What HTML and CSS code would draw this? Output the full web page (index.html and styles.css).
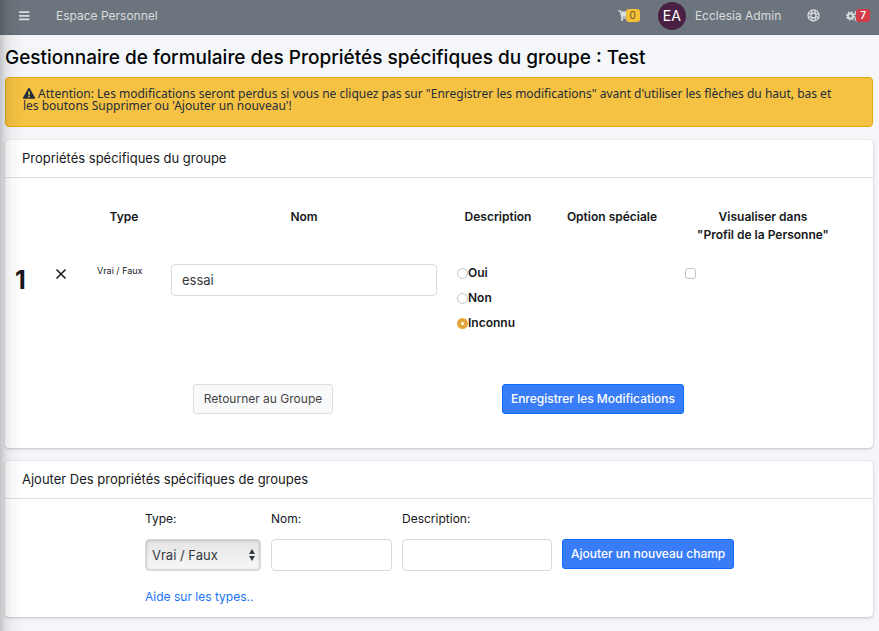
FILE: index.html
```html
<!DOCTYPE html>
<html lang="fr">
<head>
<meta charset="utf-8">
<meta name="viewport" content="width=device-width, initial-scale=1">
<title>Propriétés spécifiques du groupe</title>
<link rel="stylesheet" href="styles.css">
</head>
<body>
<header class="navbar">
  <button class="nav-button" type="button" aria-label="Menu">
    <svg width="12" height="12" viewBox="0 0 12 12"><path d="M1 2.2h10.4M1 5.8h10.4M1 9.4h10.4" stroke="currentColor" stroke-width="1.7"/></svg>
  </button>
  <a class="nav-home" href="#">Espace Personnel</a>
  <a class="nav-icon cart" href="#" aria-label="Panier">
    <svg width="12" height="11" viewBox="0 0 576 512"><path fill="currentColor" d="M528 301l47-208c4-15-8-29-23-29H159l-9-45C148 8 138 0 127 0H24C11 0 0 11 0 24v16c0 13 11 24 24 24h70l70 343a56 56 0 1 0 67 9h210a56 56 0 1 0 64-11l5-25c4-15-8-29-23-29H218l-6-32h293c11 0 20-8 23-18z"/></svg>
    <span class="badge badge-warning">0</span>
  </a>
  <a class="user" href="#">
    <span class="avatar">EA</span>
    <span>Ecclesia Admin</span>
  </a>
  <a class="nav-icon" href="#" aria-label="Aide">
    <svg width="13" height="13" viewBox="0 0 26 26" fill="none" stroke="currentColor"><circle cx="13" cy="13" r="11" stroke-width="2.6"/><circle cx="13" cy="13" r="5" stroke-width="2.6"/><path d="M9.6 2v6.4M16.4 2v6.4M9.6 17.6V24M16.4 17.6V24M2 9.6h6.4M2 16.4h6.4M17.6 9.6H24M17.6 16.4H24" stroke-width="2.4"/></svg>
  </a>
  <a class="nav-icon gears" href="#" aria-label="Réglages">
    <svg width="14" height="12" viewBox="0 0 28 24" fill="none" stroke="currentColor"><circle cx="9" cy="12" r="5" stroke-width="4"/><circle cx="9" cy="12" r="7.6" stroke-width="3" stroke-dasharray="3.2 2.77"/><circle cx="22" cy="6" r="3" stroke-width="2.4"/><circle cx="22" cy="6" r="4.6" stroke-width="2" stroke-dasharray="2.4 2.4"/><circle cx="22" cy="18" r="3" stroke-width="2.4"/><circle cx="22" cy="18" r="4.6" stroke-width="2" stroke-dasharray="2.4 2.4"/></svg>
    <span class="badge badge-danger">7</span>
  </a>
</header>

<main class="content">
  <h1>Gestionnaire de formulaire des Propriétés spécifiques du groupe : Test</h1>

  <div class="alert" role="alert">
    <svg class="alert-icon" width="12" height="11" viewBox="0 0 24 22"><path fill="currentColor" fill-rule="evenodd" d="M10.3 1.2a2 2 0 0 1 3.4 0l9.9 17.4a2 2 0 0 1-1.7 3H2.1a2 2 0 0 1-1.7-3zM10.2 7l.5 7.4h2.6l.5-7.4zM12 15.6a1.8 1.8 0 1 0 0 3.6 1.8 1.8 0 0 0 0-3.6z"/></svg>
    Attention: Les modifications seront perdus si vous ne cliquez pas sur "Enregistrer les modifications" avant d'utiliser les flèches du haut, bas et les boutons Supprimer ou 'Ajouter un nouveau'!
  </div>

  <section class="card">
    <h2 class="card-title">Propriétés spécifiques du groupe</h2>
    <form class="fields-form">
      <table class="fields">
        <colgroup><col class="col-rank"><col class="col-delete"><col class="col-type"><col><col class="col-description"><col class="col-option"><col class="col-profile"></colgroup>
        <thead>
          <tr><th></th><th></th><th>Type</th><th>Nom</th><th>Description</th><th>Option spéciale</th><th>Visualiser dans<br>"Profil de la Personne"</th></tr>
        </thead>
        <tbody>
          <tr>
            <td class="rank">1</td>
            <td><button class="delete" type="button" aria-label="Supprimer"><svg width="12" height="12" viewBox="0 0 12 12"><path d="M1.5 1.5l9 9M10.5 1.5l-9 9" stroke="currentColor" stroke-width="1.5"/></svg></button></td>
            <td class="type">Vrai / Faux</td>
            <td><input class="control" type="text" value="essai" aria-label="Nom"></td>
            <td class="choices">
              <label><input type="radio" name="valeur">Oui</label>
              <label><input type="radio" name="valeur">Non</label>
              <label><input type="radio" name="valeur" checked>Inconnu</label>
            </td>
            <td></td>
            <td><input class="check" type="checkbox" aria-label="Visualiser dans le profil"></td>
          </tr>
        </tbody>
      </table>
      <div class="actions">
        <div><button class="btn btn-light" type="button">Retourner au Groupe</button></div>
        <div><button class="btn btn-primary" type="submit">Enregistrer les Modifications</button></div>
      </div>
    </form>
  </section>

  <section class="card">
    <h2 class="card-title">Ajouter Des propriétés spécifiques de groupes</h2>
    <form class="add-form">
      <div class="field field-type">
        <label for="new-type">Type:</label>
        <div class="select-wrap">
          <select class="control" id="new-type"><option>Vrai / Faux</option></select>
          <svg class="arrows" width="6" height="12" viewBox="0 0 6 12"><path fill="currentColor" d="M3 0l3 5H0zM3 12L0 7h6z"/></svg>
        </div>
        <a class="help" href="#">Aide sur les types..</a>
      </div>
      <div class="field field-name">
        <label for="new-name">Nom:</label>
        <input class="control" id="new-name" type="text">
      </div>
      <div class="field field-description">
        <label for="new-description">Description:</label>
        <input class="control" id="new-description" type="text">
      </div>
      <button class="btn btn-primary add" type="submit">Ajouter un nouveau champ</button>
    </form>
  </section>
</main>
</body>
</html>
```
FILE: styles.css
```css
* {
  box-sizing: border-box;
}

body {
  margin: 0;
  min-height: 100vh;
  background: #f4f6f9;
  color: #16181b;
  font: 12px/18px Inter, "Liberation Sans", sans-serif;
}

/* Shadow cast by the collapsed sidebar */
body::after {
  content: "";
  position: fixed;
  inset: 0 auto 0 0;
  width: 24px;
  background: linear-gradient(90deg, rgba(0, 0, 0, .2), rgba(0, 0, 0, .08) 6px, rgba(0, 0, 0, .03) 12px, transparent);
  pointer-events: none;
}

a {
  color: #1a73f5;
  text-decoration: none;
}

button,
input,
select {
  font: inherit;
  color: inherit;
}

.navbar {
  display: flex;
  align-items: center;
  height: 35px;
  padding: 0 9px 3px 18px;
  background: #6c757d;
  border-bottom: 1px solid #656e76;
  color: #dadcde;
}

.navbar a {
  color: inherit;
}

.nav-button {
  display: flex;
  padding: 0;
  border: 0;
  background: none;
}

.nav-home {
  margin: 0 auto 0 26px;
}

.nav-icon {
  display: flex;
  align-items: center;
}

.badge {
  height: 13px;
  padding: 0 4px;
  border-radius: 3px;
  font-size: 10px;
  line-height: 13px;
}

.badge-warning {
  margin-left: -4px;
  background: #f5c037;
  color: #5f5426;
}

.badge-danger {
  margin-left: -4px;
  background: #d23b47;
  color: #fff;
  font-weight: 600;
}

.user {
  display: flex;
  align-items: center;
  gap: 9px;
  margin: 0 26px 0 18px;
}

.avatar {
  width: 28px;
  height: 28px;
  border-radius: 50%;
  background: #4a2145;
  color: #fff;
  font-size: 14px;
  line-height: 28px;
  text-align: center;
}

.gears {
  margin-left: 26px;
}

.content {
  padding: 8px 6px 14px 5px;
}

h1 {
  margin: 0 0 4px;
  color: #050607;
  font-size: 19px;
  font-weight: 500;
  line-height: 30px;
}

.alert {
  margin-bottom: 13px;
  padding: 10px 24px 14px 17px;
  border: 1px solid #dfa90e;
  border-radius: 4px;
  background: #f5c243;
  color: #1f2d3d;
  font: 12px/12px "Noto Sans", "Open Sans", sans-serif;
}

.alert-icon {
  vertical-align: -1px;
}

.card {
  margin-bottom: 13px;
  border-radius: 4px;
  background: #fff;
  box-shadow: 0 0 1px rgba(0, 0, 0, .15), 0 1px 3px rgba(0, 0, 0, .2);
}

.card-title {
  margin: 0;
  padding: 9px 17px;
  border-bottom: 1px solid #dfdfdf;
  font-size: 13px;
  font-weight: 400;
  line-height: 19px;
}

.fields-form {
  padding: 20px 22px 34px 0;
}

.fields {
  width: 100%;
  table-layout: fixed;
  border-collapse: collapse;
}

.col-rank { width: 40px; }
.col-delete { width: 42px; }
.col-type { width: 74px; }
.col-description { width: 102px; }
.col-option { width: 126px; }
.col-profile { width: 176px; }

.fields th,
.fields td {
  padding: 10px;
  vertical-align: top;
  text-align: left;
}

.fields th {
  text-align: center;
  font-weight: 600;
  white-space: nowrap;
}

.fields .rank {
  font-size: 25px;
  font-weight: 700;
  line-height: 32px;
}

.fields .type {
  font-size: 9px;
  line-height: 14px;
}

.fields .type,
.fields .choices {
  white-space: nowrap;
}

.delete {
  display: flex;
  padding: 4px 0;
  border: 0;
  background: none;
}

.control {
  display: block;
  width: 100%;
  height: 32px;
  padding: 0 10px;
  border: 1px solid #d6d9df;
  border-radius: 4px;
  background: #fff;
  color: #343a40;
  font-size: 13px;
}

.choices label {
  display: flex;
  align-items: center;
  margin-bottom: 7px;
  font-weight: 600;
}

input[type="radio"],
.check {
  appearance: none;
  width: 11px;
  height: 11px;
  margin: 0;
  border: 1px solid #c4c4c4;
  background: #fff;
}

input[type="radio"] {
  border-radius: 50%;
}

input[type="radio"]:checked {
  border: 4px solid #e2a63a;
}

.fields .check {
  display: block;
  margin-top: 4px;
  border-radius: 3px;
}

.actions {
  display: grid;
  grid-template-columns: 39% 39%;
  justify-content: center;
  padding-top: 35px;
  text-align: center;
}

.btn {
  height: 30px;
  padding: 0 10px;
  border: 1px solid;
  border-radius: 3px;
}

.btn-light {
  border-color: #dcdddf;
  background: #f8f9fa;
  color: #444;
}

.btn-primary {
  padding: 0 8px;
  border-color: #0a6cff;
  background: #397cf7;
  color: #fff;
  font-weight: 500;
}

.add-form {
  display: flex;
  align-items: flex-start;
  gap: 10px;
  padding: 11px 17px 11px 140px;
}

.field label {
  display: block;
  margin-bottom: 11px;
}

.field-type { flex: 0 1 116px; }
.field-name { flex: 0 1 121px; }
.field-description { flex: 0 1 150px; }

.select-wrap {
  position: relative;
}

.select-wrap .control {
  appearance: none;
  padding: 0 6px;
  background: linear-gradient(#e4e4e4, #f8f8f8);
  box-shadow: inset 0 0 3px rgba(0, 0, 0, .3);
}

.arrows {
  position: absolute;
  top: 10px;
  right: 6px;
  pointer-events: none;
  color: #343a40;
}

.help {
  display: block;
  margin-top: 17px;
  white-space: nowrap;
}

.add {
  margin-top: 29px;
}
```
